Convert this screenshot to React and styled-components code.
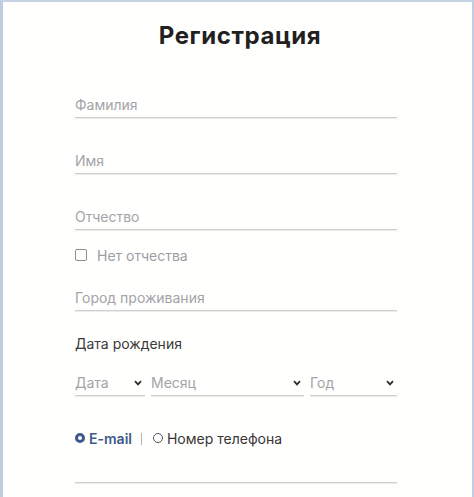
import React from "react";
import styled, { createGlobalStyle } from "styled-components";

const Global = createGlobalStyle`
  html, body { margin: 0; padding: 0; background: #ffffff; }
  * { box-sizing: border-box; }
  body { font-family: Inter, "Noto Sans", sans-serif; }
`;

const Frame = styled.div`
  min-height: 497px;
  border-left: 3px solid #bfcde0;
  border-top: 2px solid #c6d3e4;
  border-right: 2px solid #bfcde0;
  background: #fffffe;
  padding: 19px 0 0 72px;
`;

const Form = styled.form`
  width: 322px;
  display: flex;
  flex-direction: column;
`;

const Title = styled.h1`
  margin: 0 0 43px;
  padding-left: 8px;
  font-size: 24px;
  line-height: 30px;
  font-weight: 700;
  color: #231f20;
  text-align: center;
  letter-spacing: 0.6px;
`;

const TextInput = styled.input`
  display: block;
  width: 100%;
  border: none;
  border-bottom: 1px solid #cfcfcf;
  box-shadow: 0 1px 0 #ececec;
  padding: 0 0 3px;
  margin: 0 0 ${(p) => p.$gap ?? 32}px;
  height: 24px;
  line-height: 20px;
  font-family: inherit;
  font-size: 14px;
  color: #333;
  background: transparent;
  outline: none;
  &::placeholder { color: #a3a3a8; }
`;

const CheckRow = styled.label`
  display: flex;
  align-items: center;
  gap: 10px;
  height: 20px;
  margin: -17px 0 22px;
  font-size: 14px;
  color: #9d9da2;
`;

const Box = styled.span`
  width: 12px;
  height: 12px;
  border: 1px solid #8d8d8d;
  border-radius: 2px;
  flex: none;
`;

const Label = styled.div`
  height: 20px;
  line-height: 20px;
  font-size: 14px;
  color: #3a3a3a;
  margin: 0 0 18px;
`;

const SelectRow = styled.div`
  display: grid;
  grid-template-columns: 70px 153px 87px;
  gap: 6px;
  margin-bottom: 32px;
`;

const SelectWrap = styled.div`
  position: relative;
  height: 24px;
  border-bottom: 1px solid #cfcfcf;
  box-shadow: 0 1px 0 #ececec;
`;

const Select = styled.select`
  appearance: none;
  -webkit-appearance: none;
  width: 100%;
  height: 23px;
  border: none;
  background: transparent;
  padding: 0 0 3px;
  font-family: inherit;
  font-size: 14px;
  color: #a3a3a8;
  outline: none;
`;

const Chevron = styled.svg`
  position: absolute;
  right: 3px;
  top: 8px;
  pointer-events: none;
`;

const RadioRow = styled.div`
  display: flex;
  align-items: center;
  height: 20px;
  font-size: 14px;
  margin-bottom: 11px;
`;

const RadioOption = styled.label`
  display: flex;
  align-items: center;
  gap: 4px;
  color: ${(p) => (p.$active ? "#3e5a8b" : "#363636")};
  font-weight: ${(p) => (p.$active ? 600 : 400)};
`;

const Dot = styled.span`
  width: 10px;
  height: 10px;
  border-radius: 50%;
  flex: none;
  border: ${(p) => (p.$active ? "3px solid #3e5a8b" : "1px solid #555")};
  background: #fff;
`;

const Sep = styled.span`
  width: 1px;
  height: 12px;
  background: #b5b5b5;
  margin: 2px 11px 0 9px;
  flex: none;
`;

const ChevronIcon = () => (
  <Chevron width="8" height="6" viewBox="0 0 8 6">
    <path d="M1 1.2 L4 4.4 L7 1.2" fill="none" stroke="#2e2e2e" strokeWidth="1.8" />
  </Chevron>
);

export default function App() {
  return (
    <>
      <Global />
      <Frame>
        <Form onSubmit={(e) => e.preventDefault()}>
          <Title>Регистрация</Title>
          <TextInput placeholder="Фамилия" />
          <TextInput placeholder="Имя" />
          <TextInput placeholder="Отчество" />
          <CheckRow>
            <Box />
            Нет отчества
          </CheckRow>
          <TextInput placeholder="Город проживания" $gap={23} />
          <Label>Дата рождения</Label>
          <SelectRow>
            <SelectWrap>
              <Select defaultValue="">
                <option value="">Дата</option>
              </Select>
              <ChevronIcon />
            </SelectWrap>
            <SelectWrap>
              <Select defaultValue="">
                <option value="">Месяц</option>
              </Select>
              <ChevronIcon />
            </SelectWrap>
            <SelectWrap>
              <Select defaultValue="">
                <option value="">Год</option>
              </Select>
              <ChevronIcon />
            </SelectWrap>
          </SelectRow>
          <RadioRow>
            <RadioOption $active>
              <Dot $active />
              E-mail
            </RadioOption>
            <Sep />
            <RadioOption>
              <Dot />
              Номер телефона
            </RadioOption>
          </RadioRow>
          <TextInput $gap={0} />
        </Form>
      </Frame>
    </>
  );
}
